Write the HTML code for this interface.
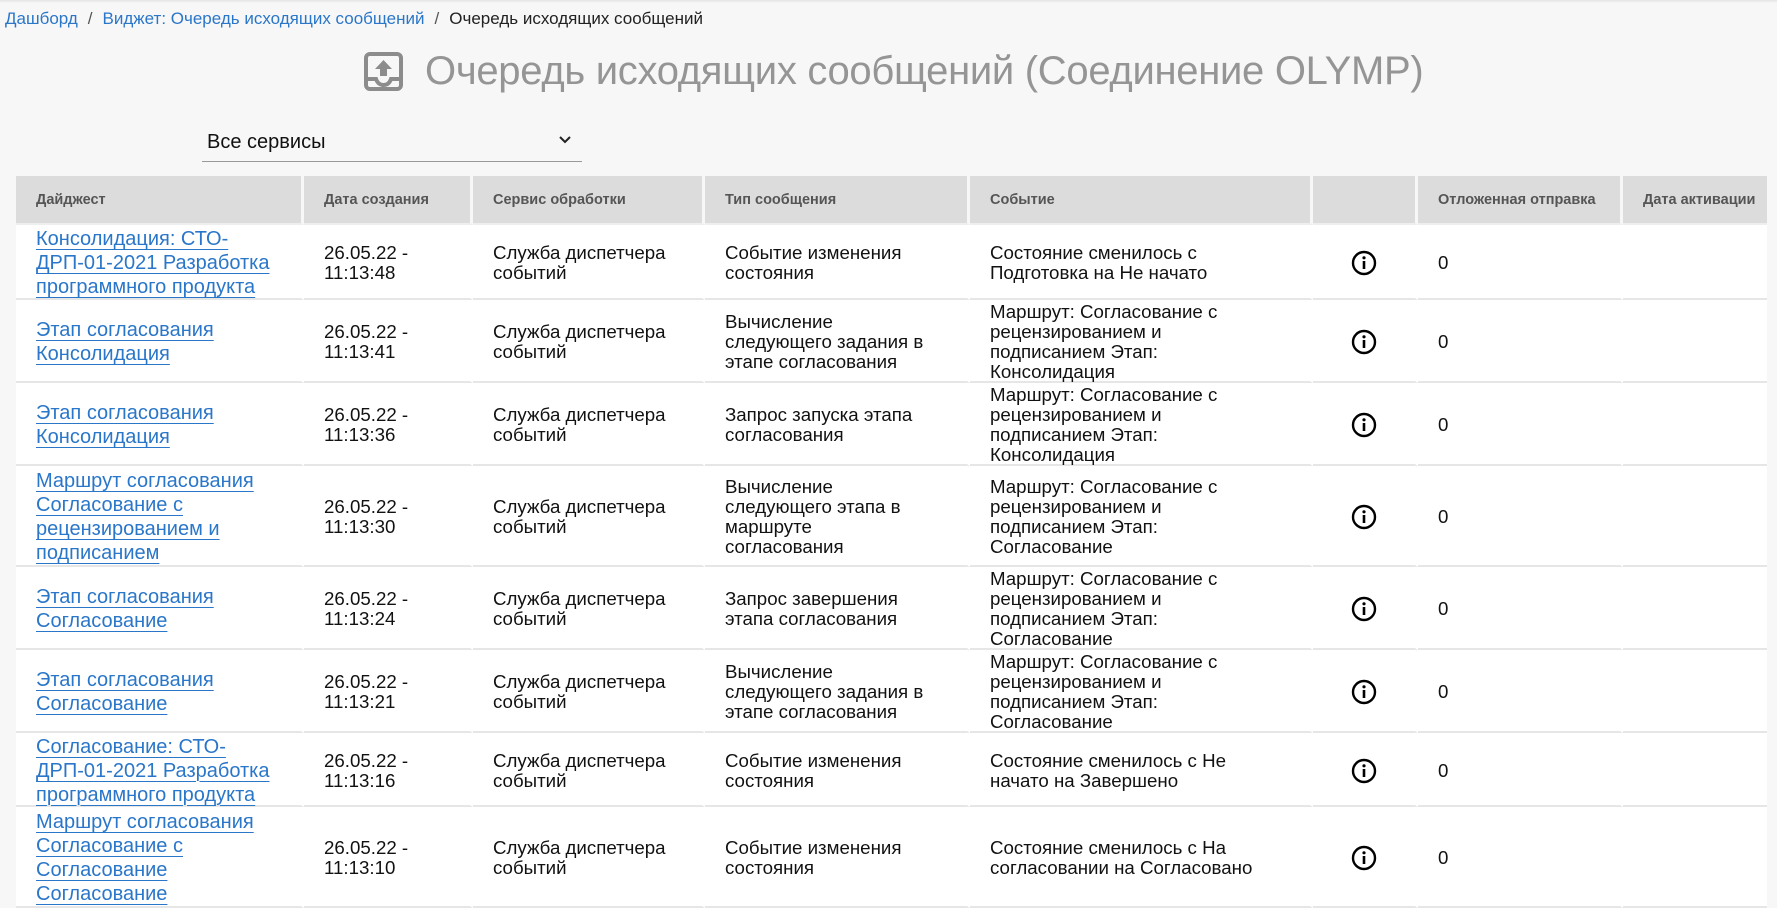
<!DOCTYPE html>
<html><head><meta charset="utf-8">
<style>
*{box-sizing:border-box;margin:0;padding:0}
body{width:1777px;height:866px;overflow:hidden;background:#f7f7f7;font-family:"Liberation Sans",Arial,sans-serif;color:#111;position:relative}
.top{position:absolute;left:0;top:0;width:1777px;height:3px;background:linear-gradient(#e4e4e4,#f7f7f7)}
.bc{position:absolute;left:5px;top:9px;font-size:17px;color:#222;white-space:nowrap}
.bc a{color:#2a76c9;text-decoration:none}
.bc .s{color:#555;margin:0 10px}
.title{position:absolute;left:425px;top:49px;font-size:40px;color:#959595;white-space:nowrap;letter-spacing:-0.3px}
.icon{position:absolute;left:364px;top:52px}
.sel{position:absolute;left:202px;top:125px;width:380px;height:37px;border-bottom:1.5px solid #999;font-size:20px;padding:6px 5px}
.sel .ch{position:absolute;right:10px;top:8px}
.tbl{position:absolute;left:16px;top:176px;width:1751px}
.row{display:flex}
.c{flex:none;border-right:3px solid #f7f7f7;display:flex;align-items:center;padding-left:20px;white-space:nowrap}
.hd .c{background:#dcdcdc;height:49px;font-size:14.5px;font-weight:bold;color:#555;border-bottom:2px solid #eee}
.bd .c{background:#fff;font-size:18.7px;line-height:20px;border-bottom:2px solid #e6e6e6;border-right:3px solid #fff;padding-top:3px}
.c1{width:288px}.c2{width:169px}.c3{width:232px}.c4{width:265px}.c5{width:343px}.c6{width:105px;justify-content:center;padding-left:0!important}.c7{width:205px}.c8{width:144px;border-right:none!important}
.bd .c1 a{color:#2a76c9;font-size:20px;line-height:24px;text-decoration:underline;text-underline-offset:4px;text-decoration-thickness:1px}
</style></head><body>
<div class="top"></div>
<div class="bc"><a>Дашборд</a><span class="s">/</span><a>Виджет: Очередь исходящих сообщений</a><span class="s">/</span>Очередь исходящих сообщений</div>
<svg class="icon" width="39" height="39" viewBox="0 0 39 39"><rect x="2" y="2" width="35" height="35" rx="4" fill="none" stroke="#8c8c8c" stroke-width="4"/><path d="M19.5 8 L28 17 H23 V24 H16 V17 H11 Z" fill="#8c8c8c"/><path d="M3 27 H12 Q14 33 19.5 33 Q25 33 27 27 H36" fill="none" stroke="#8c8c8c" stroke-width="4"/></svg>
<div class="title">Очередь исходящих сообщений (Соединение OLYMP)</div>
<div class="sel">Все сервисы<svg class="ch" width="14" height="14" viewBox="0 0 14 14"><path d="M2 4 L7 9 L12 4" fill="none" stroke="#222" stroke-width="2"/></svg></div>
<div class="tbl">
<div class="row hd"><div class="c c1">Дайджест</div><div class="c c2">Дата создания</div><div class="c c3">Сервис обработки</div><div class="c c4">Тип сообщения</div><div class="c c5">Событие</div><div class="c c6"></div><div class="c c7">Отложенная отправка</div><div class="c c8">Дата активации</div></div>

<div class="row bd" style="height:75px"><div class="c c1"><a>Консолидация: СТО-<br>ДРП-01-2021 Разработка<br>программного продукта</a></div><div class="c c2">26.05.22 -<br>11:13:48</div><div class="c c3">Служба диспетчера<br>событий</div><div class="c c4">Событие изменения<br>состояния</div><div class="c c5">Состояние сменилось с<br>Подготовка на Не начато</div><div class="c c6"><svg width="26" height="26" viewBox="0 0 26 26"><circle cx="13" cy="13" r="11" fill="none" stroke="#000" stroke-width="2.4"/><rect x="11.7" y="11" width="2.6" height="8" fill="#000"/><circle cx="13" cy="7.8" r="1.6" fill="#000"/></svg></div><div class="c c7">0</div><div class="c c8"></div></div>

<div class="row bd" style="height:83px"><div class="c c1"><a>Этап согласования<br>Консолидация</a></div><div class="c c2">26.05.22 -<br>11:13:41</div><div class="c c3">Служба диспетчера<br>событий</div><div class="c c4">Вычисление<br>следующего задания в<br>этапе согласования</div><div class="c c5">Маршрут: Согласование с<br>рецензированием и<br>подписанием Этап:<br>Консолидация</div><div class="c c6"><svg width="26" height="26" viewBox="0 0 26 26"><circle cx="13" cy="13" r="11" fill="none" stroke="#000" stroke-width="2.4"/><rect x="11.7" y="11" width="2.6" height="8" fill="#000"/><circle cx="13" cy="7.8" r="1.6" fill="#000"/></svg></div><div class="c c7">0</div><div class="c c8"></div></div>

<div class="row bd" style="height:83px"><div class="c c1"><a>Этап согласования<br>Консолидация</a></div><div class="c c2">26.05.22 -<br>11:13:36</div><div class="c c3">Служба диспетчера<br>событий</div><div class="c c4">Запрос запуска этапа<br>согласования</div><div class="c c5">Маршрут: Согласование с<br>рецензированием и<br>подписанием Этап:<br>Консолидация</div><div class="c c6"><svg width="26" height="26" viewBox="0 0 26 26"><circle cx="13" cy="13" r="11" fill="none" stroke="#000" stroke-width="2.4"/><rect x="11.7" y="11" width="2.6" height="8" fill="#000"/><circle cx="13" cy="7.8" r="1.6" fill="#000"/></svg></div><div class="c c7">0</div><div class="c c8"></div></div>

<div class="row bd" style="height:101px"><div class="c c1"><a>Маршрут согласования<br>Согласование с<br>рецензированием и<br>подписанием</a></div><div class="c c2">26.05.22 -<br>11:13:30</div><div class="c c3">Служба диспетчера<br>событий</div><div class="c c4">Вычисление<br>следующего этапа в<br>маршруте<br>согласования</div><div class="c c5">Маршрут: Согласование с<br>рецензированием и<br>подписанием Этап:<br>Согласование</div><div class="c c6"><svg width="26" height="26" viewBox="0 0 26 26"><circle cx="13" cy="13" r="11" fill="none" stroke="#000" stroke-width="2.4"/><rect x="11.7" y="11" width="2.6" height="8" fill="#000"/><circle cx="13" cy="7.8" r="1.6" fill="#000"/></svg></div><div class="c c7">0</div><div class="c c8"></div></div>

<div class="row bd" style="height:83px"><div class="c c1"><a>Этап согласования<br>Согласование</a></div><div class="c c2">26.05.22 -<br>11:13:24</div><div class="c c3">Служба диспетчера<br>событий</div><div class="c c4">Запрос завершения<br>этапа согласования</div><div class="c c5">Маршрут: Согласование с<br>рецензированием и<br>подписанием Этап:<br>Согласование</div><div class="c c6"><svg width="26" height="26" viewBox="0 0 26 26"><circle cx="13" cy="13" r="11" fill="none" stroke="#000" stroke-width="2.4"/><rect x="11.7" y="11" width="2.6" height="8" fill="#000"/><circle cx="13" cy="7.8" r="1.6" fill="#000"/></svg></div><div class="c c7">0</div><div class="c c8"></div></div>

<div class="row bd" style="height:83px"><div class="c c1"><a>Этап согласования<br>Согласование</a></div><div class="c c2">26.05.22 -<br>11:13:21</div><div class="c c3">Служба диспетчера<br>событий</div><div class="c c4">Вычисление<br>следующего задания в<br>этапе согласования</div><div class="c c5">Маршрут: Согласование с<br>рецензированием и<br>подписанием Этап:<br>Согласование</div><div class="c c6"><svg width="26" height="26" viewBox="0 0 26 26"><circle cx="13" cy="13" r="11" fill="none" stroke="#000" stroke-width="2.4"/><rect x="11.7" y="11" width="2.6" height="8" fill="#000"/><circle cx="13" cy="7.8" r="1.6" fill="#000"/></svg></div><div class="c c7">0</div><div class="c c8"></div></div>

<div class="row bd" style="height:74px"><div class="c c1"><a>Согласование: СТО-<br>ДРП-01-2021 Разработка<br>программного продукта</a></div><div class="c c2">26.05.22 -<br>11:13:16</div><div class="c c3">Служба диспетчера<br>событий</div><div class="c c4">Событие изменения<br>состояния</div><div class="c c5">Состояние сменилось с Не<br>начато на Завершено</div><div class="c c6"><svg width="26" height="26" viewBox="0 0 26 26"><circle cx="13" cy="13" r="11" fill="none" stroke="#000" stroke-width="2.4"/><rect x="11.7" y="11" width="2.6" height="8" fill="#000"/><circle cx="13" cy="7.8" r="1.6" fill="#000"/></svg></div><div class="c c7">0</div><div class="c c8"></div></div>

<div class="row bd" style="height:101px"><div class="c c1"><a>Маршрут согласования<br>Согласование с<br>Согласование<br>Согласование</a></div><div class="c c2">26.05.22 -<br>11:13:10</div><div class="c c3">Служба диспетчера<br>событий</div><div class="c c4">Событие изменения<br>состояния</div><div class="c c5">Состояние сменилось с На<br>согласовании на Согласовано</div><div class="c c6"><svg width="26" height="26" viewBox="0 0 26 26"><circle cx="13" cy="13" r="11" fill="none" stroke="#000" stroke-width="2.4"/><rect x="11.7" y="11" width="2.6" height="8" fill="#000"/><circle cx="13" cy="7.8" r="1.6" fill="#000"/></svg></div><div class="c c7">0</div><div class="c c8"></div></div>
</div>
</body></html>
